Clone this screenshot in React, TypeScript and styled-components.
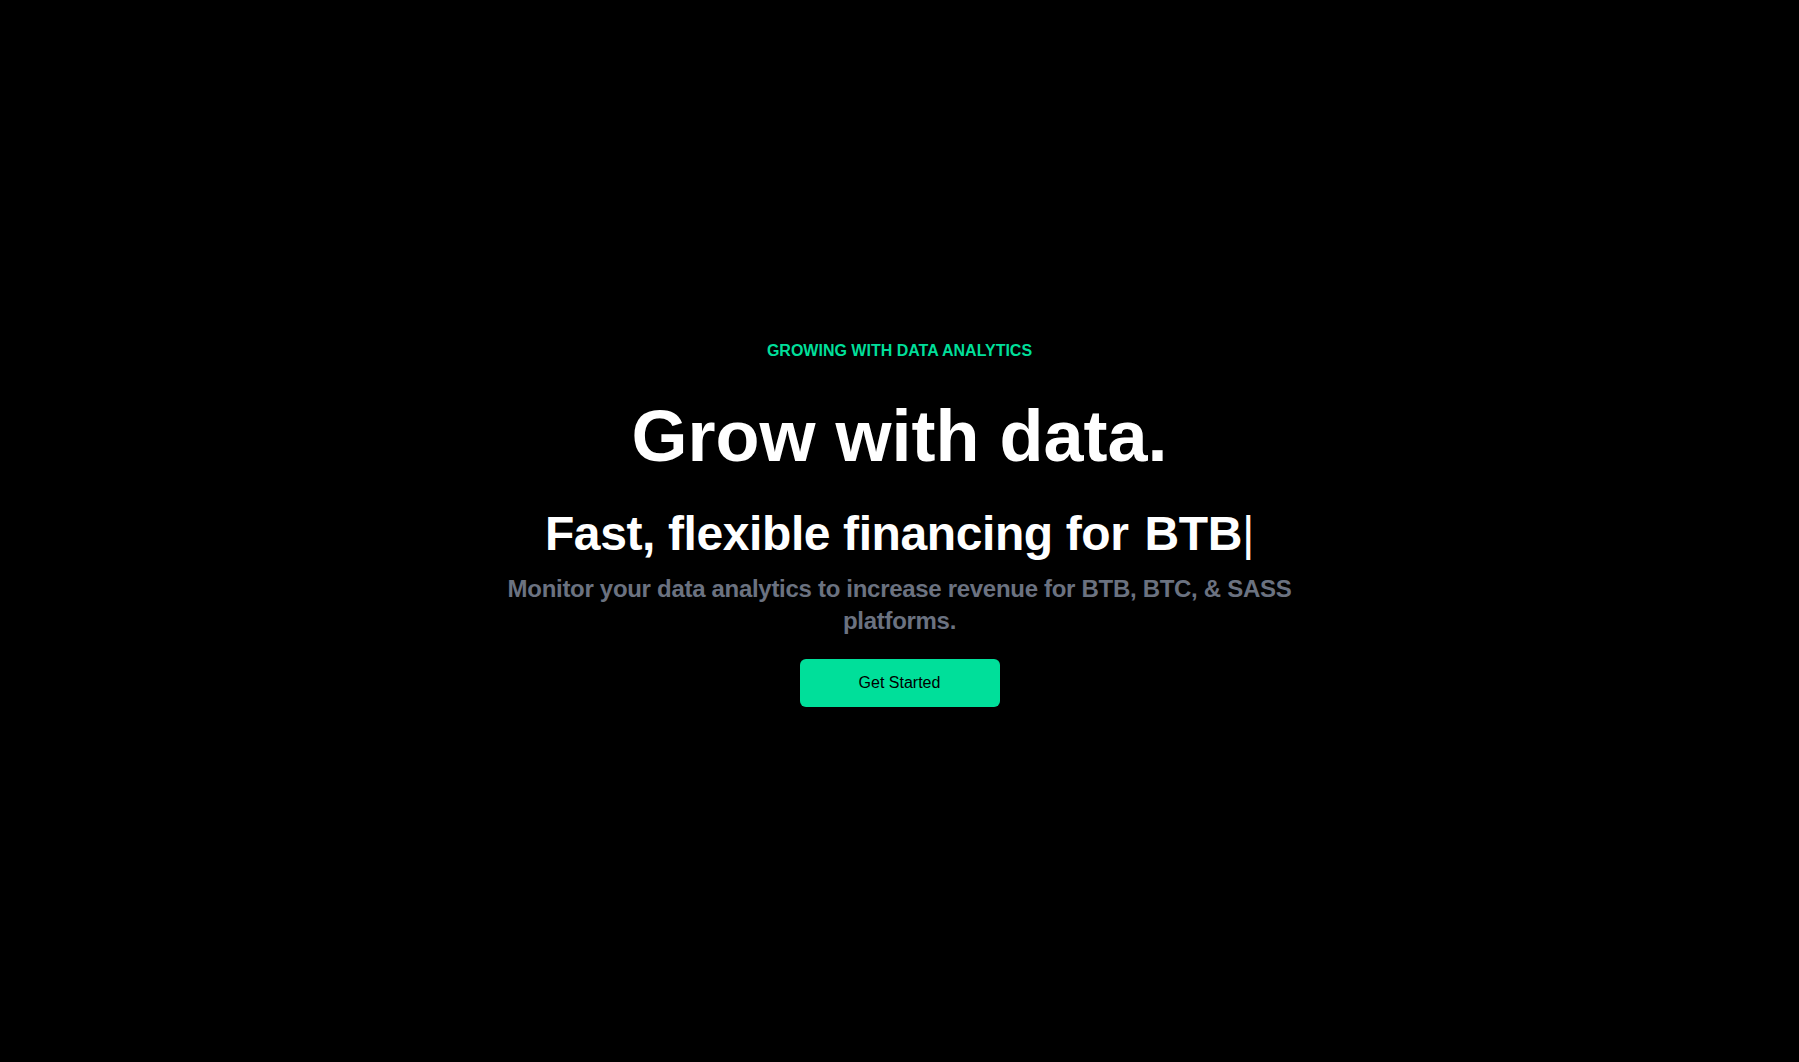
import React from 'react'
import styled, { createGlobalStyle, keyframes } from 'styled-components'

const green = '#00df9a'

const GlobalStyle = createGlobalStyle`
  *, *::before, *::after {
    box-sizing: border-box;
  }
  html, body {
    margin: 0;
    padding: 0;
    background-color: #000;
  }
  body {
    font-family: 'Liberation Sans', Arial, sans-serif;
    color: #fff;
  }
`

const blink = keyframes`
  0% { opacity: 1; }
  50% { opacity: 0; }
  100% { opacity: 1; }
`

const Hero = styled.section`
  color: #fff;
`

const HeroInner = styled.div`
  max-width: 800px;
  width: 100%;
  height: 100vh;
  margin: 0 auto;
  text-align: center;
  display: flex;
  flex-direction: column;
  justify-content: center;
`

const Eyebrow = styled.p`
  margin: 0;
  padding: 8px;
  color: ${green};
  font-weight: 700;
  font-size: 16px;
  line-height: 24px;
`

const Title = styled.h1`
  margin: 0;
  padding: 29px 0 19px;
  font-size: 72px;
  line-height: 72px;
  font-weight: 700;
`

const TypedRow = styled.div`
  display: flex;
  justify-content: center;
  align-items: center;
  letter-spacing: -0.4px;
`

const TypedLead = styled.p`
  margin: 0;
  padding: 19px 0 13px;
  font-size: 48px;
  line-height: 48px;
  font-weight: 700;
`

const TypedWord = styled.span`
  padding-left: 16px;
  padding-top: 6px;
  font-size: 48px;
  line-height: 48px;
  font-weight: 700;
`

const Cursor = styled.span`
  font-weight: 400;
  animation: ${blink} 0.7s infinite;
`

const Lead = styled.p`
  margin: 0;
  padding-top: 2px;
  font-size: 24px;
  line-height: 32px;
  font-weight: 700;
  letter-spacing: -0.3px;
  color: #6b7280;
`

const CtaButton = styled.button`
  width: 200px;
  margin: 22px auto 24px;
  padding: 12px 0;
  border: none;
  border-radius: 6px;
  background-color: ${green};
  color: #000;
  font-family: inherit;
  font-size: 16px;
  line-height: 24px;
  font-weight: 500;
  cursor: pointer;
`

export default function App() {
  return (
    <>
      <GlobalStyle />
      <Hero>
        <HeroInner>
          <Eyebrow>GROWING WITH DATA ANALYTICS</Eyebrow>
          <Title>Grow with data.</Title>
          <TypedRow>
            <TypedLead>Fast, flexible financing for</TypedLead>
            <TypedWord>
              BTB<Cursor>|</Cursor>
            </TypedWord>
          </TypedRow>
          <Lead>Monitor your data analytics to increase revenue for BTB, BTC, &amp; SASS platforms.</Lead>
          <CtaButton>Get Started</CtaButton>
        </HeroInner>
      </Hero>
    </>
  )
}
